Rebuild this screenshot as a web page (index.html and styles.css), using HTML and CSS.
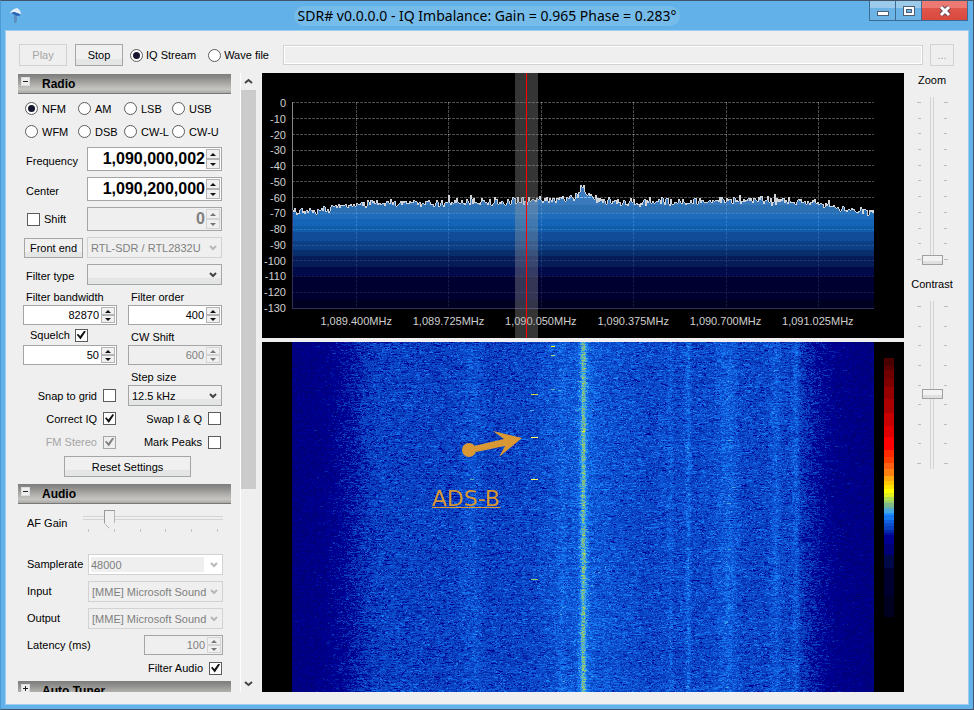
FILE: index.html
```html
<!DOCTYPE html>
<html lang="en">

<head>
    <meta charset="UTF-8">
    <meta name="viewport" content="width=device-width, initial-scale=1.0">
    <title>SDR#</title>
    <link rel="stylesheet" href="styles.css">
</head>
<body>
    <div class="window">
        <header class="titlebar">
            <svg class="app-icon" width="14" height="18" viewBox="0 0 14 18">
                <path d="M5 7 L8 7 L8 14 L7 16 L5 16 Z" fill="#5d8fc0"/>
                <path d="M1 6 Q3 2 8 1 Q12 3 12 8 Q9 6 7 8 Q4 6 1 6 Z" fill="#e4edf5"/>
                <path d="M2 6 Q5 4 8 6 Q10 6 12 8 L9 9 L6 8 Z" fill="#2464b8"/>
            </svg>
            <h1><span>SDR# v0.0.0.0 - IQ Imbalance: Gain = 0.965 Phase = 0.283°</span></h1>
            <div class="window-buttons">
                <button class="win-button" aria-label="Minimize">
                    <svg width="14" height="12" viewBox="0 0 14 12"><rect x="1.5" y="6.5" width="11" height="4" fill="#fff" stroke="#4f5f70"/></svg>
                </button>
                <button class="win-button" aria-label="Maximize">
                    <svg width="14" height="12" viewBox="0 0 14 12"><rect x="1.5" y="1.5" width="11" height="9" fill="#fff" stroke="#4f5f70"/><rect x="4.5" y="4.5" width="5" height="3" fill="#6cb4e6" stroke="#4f5f70"/></svg>
                </button>
                <button class="win-button close" aria-label="Close">
                    <svg width="14" height="12" viewBox="0 0 14 12"><path d="M3 2 L11 10 M11 2 L3 10" stroke="#6a4a55" stroke-width="5"/><path d="M3 2 L11 10 M11 2 L3 10" stroke="#fff" stroke-width="3"/></svg>
                </button>
            </div>
        </header>

        <div class="client">
            <div class="toolbar">
                <button class="button" disabled>Play</button>
                <button class="button">Stop</button>
                <label class="option"><input type="radio" name="source" checked>IQ Stream</label>
                <label class="option wave"><input type="radio" name="source">Wave file</label>
                <input class="file-name" type="text" aria-label="Wave file name" disabled>
                <button class="button browse" disabled>...</button>
            </div>

            <div class="main">
                <div class="sidebar">
                    <div class="panels">
                        <section class="panel">
                            <h2><button class="fold" aria-label="Collapse Radio"></button>Radio</h2>
                            <div class="modes">
                                <label class="option"><input type="radio" name="mode" checked>NFM</label>
                                <label class="option"><input type="radio" name="mode">AM</label>
                                <label class="option"><input type="radio" name="mode">LSB</label>
                                <label class="option"><input type="radio" name="mode">USB</label>
                                <label class="option"><input type="radio" name="mode">WFM</label>
                                <label class="option"><input type="radio" name="mode">DSB</label>
                                <label class="option"><input type="radio" name="mode">CW-L</label>
                                <label class="option"><input type="radio" name="mode">CW-U</label>
                            </div>
                            <div class="fields">
                                <div class="row">
                                    <label for="frequency">Frequency</label>
                                    <span class="spin big"><input id="frequency" type="text" value="1,090,000,002"><span class="arrows"><button aria-label="Up"></button><button aria-label="Down"></button></span></span>
                                </div>
                                <div class="row">
                                    <label for="center">Center</label>
                                    <span class="spin big"><input id="center" type="text" value="1,090,200,000"><span class="arrows"><button aria-label="Up"></button><button aria-label="Down"></button></span></span>
                                </div>
                                <div class="row">
                                    <label class="check"><input type="checkbox">Shift</label>
                                    <span class="spin big disabled"><input type="text" value="0" aria-label="Shift" disabled><span class="arrows"><button aria-label="Up" disabled></button><button aria-label="Down" disabled></button></span></span>
                                </div>
                                <div class="row">
                                    <button class="button front-end">Front end</button>
                                    <span class="combo disabled"><select aria-label="Front end" disabled><option>RTL-SDR / RTL2832U</option></select><svg width="8" height="6" viewBox="0 0 8 6"><path d="M1 1 L4 4 L7 1"/></svg></span>
                                </div>
                                <div class="row">
                                    <label for="filterType">Filter type</label>
                                    <span class="combo"><select id="filterType"><option></option></select><svg width="8" height="6" viewBox="0 0 8 6"><path d="M1 1 L4 4 L7 1"/></svg></span>
                                </div>
                            </div>
                            <div class="pairs">
                                <label class="above" for="bandwidth">Filter bandwidth</label>
                                <label class="above" for="order">Filter order</label>
                                <span class="spin"><input id="bandwidth" type="text" value="82870"><span class="arrows"><button aria-label="Up"></button><button aria-label="Down"></button></span></span>
                                <span class="spin"><input id="order" type="text" value="400"><span class="arrows"><button aria-label="Up"></button><button aria-label="Down"></button></span></span>
                                <label class="check squelch">Squelch<input type="checkbox" checked></label>
                                <label class="above" for="cwShift">CW Shift</label>
                                <span class="spin"><input type="text" value="50" aria-label="Squelch level"><span class="arrows"><button aria-label="Up"></button><button aria-label="Down"></button></span></span>
                                <span class="spin disabled"><input id="cwShift" type="text" value="600" disabled><span class="arrows"><button aria-label="Up" disabled></button><button aria-label="Down" disabled></button></span></span>
                                <span></span>
                                <label class="above" for="stepSize">Step size</label>
                                <label class="check right">Snap to grid<input type="checkbox"></label>
                                <span class="combo"><select id="stepSize"><option>12.5 kHz</option></select><svg width="8" height="6" viewBox="0 0 8 6"><path d="M1 1 L4 4 L7 1"/></svg></span>
                                <label class="check right">Correct IQ<input type="checkbox" checked></label>
                                <label class="check right">Swap I &amp; Q<input type="checkbox"></label>
                                <label class="check right muted">FM Stereo<input type="checkbox" checked disabled></label>
                                <label class="check right">Mark Peaks<input type="checkbox"></label>
                            </div>
                            <button class="button reset">Reset Settings</button>
                        </section>

                        <section class="panel">
                            <h2><button class="fold" aria-label="Collapse Audio"></button>Audio</h2>
                            <div class="gain">
                                <label for="afGain">AF Gain</label>
                                <div class="gain-slider">
                                    <input id="afGain" type="range" min="0" max="100" value="16">
                                    <div class="gain-ticks"><i></i><i></i><i></i><i></i><i></i><i></i></div>
                                </div>
                            </div>
                            <div class="fields audio">
                                <div class="row">
                                    <label for="samplerate">Samplerate</label>
                                    <span class="combo editable disabled"><select id="samplerate" disabled><option>48000</option></select><svg width="8" height="6" viewBox="0 0 8 6"><path d="M1 1 L4 4 L7 1"/></svg></span>
                                </div>
                                <div class="row">
                                    <label for="input">Input</label>
                                    <span class="combo disabled"><select id="input" disabled><option>[MME] Microsoft Sound</option></select><svg width="8" height="6" viewBox="0 0 8 6"><path d="M1 1 L4 4 L7 1"/></svg></span>
                                </div>
                                <div class="row">
                                    <label for="output">Output</label>
                                    <span class="combo disabled"><select id="output" disabled><option>[MME] Microsoft Sound</option></select><svg width="8" height="6" viewBox="0 0 8 6"><path d="M1 1 L4 4 L7 1"/></svg></span>
                                </div>
                                <div class="row">
                                    <label for="latency">Latency (ms)</label>
                                    <span class="spin disabled"><input id="latency" type="text" value="100" disabled><span class="arrows"><button aria-label="Up" disabled></button><button aria-label="Down" disabled></button></span></span>
                                </div>
                                <label class="check right">Filter Audio<input type="checkbox" checked></label>
                            </div>
                        </section>

                        <section class="panel">
                            <h2><button class="fold closed" aria-label="Expand Auto Tuner"></button>Auto Tuner</h2>
                        </section>
                    </div>
                    <div class="scrollbar">
                        <svg width="9" height="7" viewBox="0 0 9 7"><path d="M1 5 L4.5 2 L8 5"/></svg>
                        <div class="scroll-thumb"></div>
                        <svg width="9" height="7" viewBox="0 0 9 7"><path d="M1 2 L4.5 5 L8 2"/></svg>
                    </div>
                </div>

                <div class="displays">
                    <div class="spectrum">
                        <div class="levels">
                            <span>0</span><span>-10</span><span>-20</span><span>-30</span><span>-40</span><span>-50</span><span>-60</span><span>-70</span><span>-80</span><span>-90</span><span>-100</span><span>-110</span><span>-120</span><span>-130</span>
                        </div>
                        <div class="plot"><canvas id="spectrum"></canvas></div>
                        <div class="frequencies">
                            <span>1,089.400MHz</span><span>1,089.725MHz</span><span>1,090.050MHz</span><span>1,090.375MHz</span><span>1,090.700MHz</span><span>1,091.025MHz</span>
                        </div>
                        <div class="tuning"></div>
                    </div>
                    <div class="waterfall">
                        <div class="history"><canvas id="waterfall"></canvas></div>
                        <div class="scale"><canvas id="scale"></canvas></div>
                        <div class="note">
                            <svg width="62" height="28" viewBox="0 0 62 28"><circle cx="8" cy="20" r="7"/><path d="M13 16 L43 9 L32 1 L61 8 L38 27 L44 16 L15 22 Z"/></svg>
                            <span>ADS-B</span>
                        </div>
                    </div>
                </div>

                <div class="sliders">
                    <label for="zoom">Zoom</label>
                    <div class="slider">
                        <div class="ticks"><i></i><i></i><i></i><i></i><i></i><i></i><i></i><i></i><i></i><i></i><i></i></div>
                        <input id="zoom" type="range" min="0" max="100" value="0">
                        <div class="ticks far"><i></i><i></i><i></i><i></i><i></i><i></i><i></i><i></i><i></i><i></i><i></i></div>
                    </div>
                    <label for="contrast">Contrast</label>
                    <div class="slider">
                        <div class="ticks"><i></i><i></i><i></i><i></i><i></i><i></i><i></i><i></i><i></i></div>
                        <input id="contrast" type="range" min="0" max="100" value="44">
                        <div class="ticks far"><i></i><i></i><i></i><i></i><i></i><i></i><i></i><i></i><i></i></div>
                    </div>
                </div>
            </div>
        </div>
    </div>
    <script src="script.js"></script>
</body>
</html>
```

FILE: styles.css
```css
* {
    box-sizing: border-box;
}

body {
    margin: 0;
    font-family: "Liberation Sans", Arial, sans-serif;
    font-size: 11px;
    line-height: 14px;
    color: #000;
}

button, input, select {
    margin: 0;
    padding: 0;
    font: inherit;
    color: inherit;
    border-radius: 0;
}

canvas {
    display: block;
    width: 100%;
    height: 100%;
}

.window {
    display: flex;
    flex-direction: column;
    height: 100vh;
    padding: 0 5px 5px;
    border: 1px solid #41566a;
    border-left-color: #4a9bd4;
    background: #62b1e8;
}

/* title bar */

.titlebar {
    display: flex;
    height: 30px;
    padding-left: 3px;
}

.app-icon {
    margin-top: 6px;
}

.titlebar h1 {
    flex: 1;
    margin: 0;
    padding: 5px 0 0 82px;
    text-align: center;
    font: 14px/20px "Noto Sans", "Open Sans", sans-serif;
}

.titlebar h1 span {
    display: inline-block;
    padding: 0 4px;
    border-radius: 10px;
    background: #76bceb;
}

.window-buttons {
    display: flex;
    height: 20px;
    border: 1px solid #3c6c94;
    border-top: 0;
}

.win-button {
    display: flex;
    align-items: center;
    justify-content: center;
    width: 26px;
    border: 0;
    border-right: 1px solid #3c6c94;
    background: linear-gradient(#9ccaea 35%, #6cb4e6 35%);
}

.win-button.close {
    width: 45px;
    border-right: 0;
    background: linear-gradient(#ec7a72 35%, #e0564c 35%, #d9483d);
}

.client {
    display: flex;
    flex: 1;
    flex-direction: column;
    gap: 6px;
    min-height: 0;
    padding: 12px 0 12px 12px;
    outline: 1px solid #9fcdf0;
    background: #efefef;
}

/* shared controls */

.button {
    height: 21px;
    border: 1px solid #a5a5a5;
    background: linear-gradient(#f0f0f0 70%, #e4e6e6 70%);
}

.button:disabled {
    border-color: #d2d2d2;
    color: #a5a5a5;
    background: #efefef;
}

input[type="radio"],
input[type="checkbox"] {
    display: flex;
    flex: none;
    align-items: center;
    justify-content: center;
    width: 13px;
    height: 13px;
    appearance: none;
    border: 1px solid #5c5c5c;
    background: #fff;
}

input[type="radio"] {
    border-radius: 50%;
}

input[type="radio"]:checked::before {
    content: "";
    width: 7px;
    height: 7px;
    border-radius: 50%;
    background: #15152e;
}

input[type="checkbox"]:checked::before {
    content: "";
    width: 9px;
    height: 9px;
    background: #111;
    clip-path: polygon(0 48%, 14% 36%, 38% 62%, 84% 0, 100% 12%, 42% 100%);
}

input[type="checkbox"]:disabled {
    border-color: #a5a5a5;
    background: #efefef;
}

input[type="checkbox"]:disabled::before {
    background: #808080;
}

.option,
.check {
    display: flex;
    align-items: center;
    gap: 4px;
    white-space: nowrap;
}

.spin {
    display: flex;
    height: 20px;
    padding: 1px;
    border: 1px solid #a5a5a5;
    background: #fff;
}

.spin input {
    flex: 1;
    min-width: 0;
    padding-right: 2px;
    border: 0;
    outline: 0;
    text-align: right;
    background: none;
}

.spin.big {
    height: 24px;
}

.spin.big input {
    padding-right: 1px;
    font-size: 16px;
    font-weight: bold;
}

.arrows {
    display: flex;
    flex-direction: column;
    width: 14px;
}

.arrows button {
    display: flex;
    flex: 1;
    align-items: center;
    justify-content: center;
    min-height: 0;
    border: 1px solid #b4b4b4;
    background: #f0f0f0;
}

.arrows button::before {
    content: "";
    border: 3px solid transparent;
    border-top: 0;
    border-bottom-color: #111;
}

.arrows button:last-child::before {
    transform: rotate(180deg);
}

.spin.disabled,
.combo.disabled {
    color: #808080;
    background: #efefef;
}

.disabled .arrows button {
    border-color: #d4d4d4;
}

.disabled .arrows button::before {
    border-bottom-color: #777;
}

.combo {
    position: relative;
    height: 21px;
    border: 1px solid #a5a5a5;
    background: linear-gradient(#f0f0f0 70%, #e4e6e6 70%);
}

.combo.disabled {
    border-color: #d2d2d2;
}

.combo select {
    width: 100%;
    height: 100%;
    padding: 0 3px;
    appearance: none;
    border: 0;
    outline: 0;
    opacity: 1;
    background: none;
}

.combo svg {
    position: absolute;
    top: 7px;
    right: 4px;
    fill: none;
    stroke: #444;
    stroke-width: 2;
    pointer-events: none;
}

.combo.disabled svg {
    stroke: #b8b8b8;
}

.combo.editable {
    padding: 2px 18px 2px 2px;
    background: #fff;
}

.combo.editable select {
    padding: 0;
    background: #efefef;
}

/* toolbar */

.toolbar {
    display: flex;
    align-items: center;
    height: 24px;
    padding: 0 14px 0 1px;
}

.toolbar .button {
    width: 48px;
    height: 22px;
    margin-right: 8px;
}

.toolbar .option {
    gap: 3px;
    margin-left: -1px;
}

.toolbar .wave {
    margin: 0 14px 0 12px;
}

.file-name {
    flex: 1;
    min-width: 0;
    height: 20px;
    margin-right: 7px;
    border: 1px solid #d2d2d2;
    background: #efefef;
    box-shadow: inset 0 0 0 1px #fff;
}

.toolbar .browse {
    width: 24px;
    margin-right: 0;
}

.main {
    display: flex;
    flex: 1;
    min-height: 0;
}

/* side panels */

.sidebar {
    display: flex;
    gap: 8px;
    width: 244px;
}

.panels {
    width: 214px;
    padding-top: 1px;
    overflow: hidden;
}

.panel h2 {
    display: flex;
    align-items: center;
    gap: 12px;
    width: 213px;
    height: 20px;
    margin: 0;
    padding-left: 3px;
    border-bottom: 1px solid #777;
    font-size: 12px;
    background: linear-gradient(#7d7d7d, #8c8c8a 20%, #b4b3b0 60%, #c6c5c2 80%, #a9a9a6);
}

.fold {
    align-self: flex-start;
    width: 9px;
    height: 9px;
    margin-top: 3px;
    border: 1px solid #ddd;
    background: linear-gradient(#222, #222) 50% 50% / 5px 1px no-repeat #eee;
}

.fold.closed {
    background: linear-gradient(#222, #222) 50% 50% / 5px 1px no-repeat, linear-gradient(#222, #222) 50% 50% / 1px 5px no-repeat #eee;
}

.modes {
    display: grid;
    grid-template-columns: 53px 46px 48px 60px;
    grid-auto-rows: 23px;
    padding: 3px 0 4px 7px;
}

.fields {
    display: flex;
    flex-direction: column;
    gap: 6px;
    padding: 0 10px 0 6px;
}

.row {
    display: flex;
    align-items: center;
    justify-content: space-between;
}

.row label {
    padding: 3px 0 0 2px;
}

.row .spin,
.row .combo {
    width: 135px;
}

.row .spin:not(.big) {
    width: 79px;
}

.row .check {
    padding: 0 0 0 3px;
}

.front-end {
    width: 59px;
    height: 20px;
}

.pairs {
    display: grid;
    grid-template-columns: 94px 94px;
    grid-template-rows: 20px 20px 20px 20px 20px 21px 25px 22px;
    column-gap: 11px;
    padding-left: 5px;
}

.above {
    align-self: end;
    padding: 0 0 1px 3px;
}

.squelch {
    padding-left: 7px;
    gap: 5px;
}

.right {
    justify-content: flex-end;
    gap: 6px;
    padding-right: 1px;
}

.muted {
    color: #a5a5a5;
}

.reset {
    display: block;
    width: 127px;
    margin: 3px 0 7px 46px;
}

.gain {
    display: flex;
    height: 50px;
    padding: 5px 9px 0;
}

.gain > label {
    width: 56px;
    padding-top: 7px;
}

.gain-slider {
    flex: 1;
}

.gain-slider input {
    display: block;
    width: 100%;
    height: 20px;
    appearance: none;
    background: linear-gradient(#d4d4d4, #d4d4d4) 0 7px / 100% 1px no-repeat, linear-gradient(#d4d4d4, #d4d4d4) 0 10px / 100% 1px no-repeat;
}

.gain-slider input::-webkit-slider-thumb {
    appearance: none;
    width: 11px;
    height: 19px;
    border: 1px solid #999;
    border-bottom: 0;
    background: conic-gradient(from -45deg at 50% 17px, #f0f0f0 90deg, #999 90deg);
    clip-path: polygon(0 0, 100% 0, 100% 13px, 50% 100%, 0 13px);
}

.gain-ticks {
    display: flex;
    justify-content: space-between;
    padding: 0 5px;
}

.gain-ticks i {
    width: 1px;
    height: 3px;
    background: #c4c4c4;
}

.audio {
    padding-right: 9px;
}

.audio .row label {
    padding: 0 0 1px 3px;
}

.audio .right {
    height: 14px;
    margin-bottom: 6px;
}

.scrollbar {
    display: flex;
    flex-direction: column;
    align-items: center;
    width: 16px;
    padding: 5px 0;
    border-left: 1px solid #fff;
}

.scrollbar svg {
    flex: none;
    fill: none;
    stroke: #444;
    stroke-width: 2;
}

.scroll-thumb {
    width: 100%;
    height: 399px;
    margin: 5px 0 auto;
    background: #cbcbcb;
}

/* spectrum and waterfall */

.displays {
    display: flex;
    flex: 1;
    flex-direction: column;
    gap: 4px;
    min-width: 0;
}

.spectrum {
    position: relative;
    display: grid;
    grid-template-columns: 24px minmax(0, 1fr);
    grid-template-rows: 207px 1fr;
    column-gap: 6px;
    height: 265px;
    padding: 29px 30px 0 0;
    color: #cfcfcf;
    background: #000;
}

.levels {
    display: flex;
    flex-direction: column;
    justify-content: space-between;
    margin: -6px 0;
    text-align: right;
}

.frequencies {
    display: flex;
    grid-column: 1 / -1;
    padding: 5px 10px 0 48px;
}

.frequencies span {
    flex: 1;
    text-align: center;
}

.tuning {
    position: absolute;
    top: 0;
    bottom: 0;
    left: 39.4%;
    width: 23px;
    background: linear-gradient(#f00, #f00) 11px 0 / 1px 100% no-repeat rgba(160, 160, 160, 0.33);
}

.waterfall {
    position: relative;
    display: flex;
    flex: 1;
    min-height: 0;
    padding-left: 30px;
    background: #000;
}

.history {
    flex: 1;
    min-width: 0;
    overflow: hidden;
}

.scale {
    width: 10px;
    height: 259px;
    margin: 16px 10px 0;
}

.note {
    position: absolute;
    top: 88px;
    left: 170px;
    color: #da9835;
    font: 22px/26px "DejaVu Sans", sans-serif;
    text-decoration: underline;
    text-decoration-thickness: 1px;
}

.note svg {
    display: block;
    margin: 0 0 28px 29px;
    fill: #da9835;
}

/* zoom and contrast */

.sliders {
    display: flex;
    flex-direction: column;
    align-items: center;
    width: 56px;
    margin-right: 8px;
}

.slider {
    display: flex;
    gap: 1px;
    height: 168px;
    margin: 10px 0 12px;
}

.slider input {
    width: 21px;
    height: 100%;
    writing-mode: vertical-lr;
    direction: rtl;
    appearance: none;
    background: linear-gradient(90deg, #d4d4d4 1px, transparent 1px 3px, #d4d4d4 3px) 50% 0 / 4px 100% no-repeat;
}

.slider input::-webkit-slider-thumb {
    appearance: none;
    width: 21px;
    height: 10px;
    border: 1px solid #a0a0a0;
    background: linear-gradient(#f2f2f2 60%, #dfe1e1 60%);
}

.ticks {
    display: flex;
    flex-direction: column;
    align-items: flex-end;
    justify-content: space-between;
    width: 4px;
    padding: 5px 0;
}

.ticks.far {
    align-items: flex-start;
}

.ticks i {
    width: 3px;
    height: 1px;
    background: #bcbcbc;
}

.ticks i:first-child,
.ticks i:last-child {
    width: 4px;
}
```

FILE: script.js
```javascript
// [start row, colour] from strongest to weakest signal
const PALETTE = [
    [0, '#4b0000'], [8, '#5a0000'], [12, '#700000'], [21, '#800000'], [29, '#960000'],
    [41, '#ac0000'], [55, '#c80000'], [68, '#e00000'], [79, '#ff0000'], [92, '#ff2a00'],
    [99, '#ff4000'], [105, '#ff6014'], [111, '#ff8010'], [118, '#ffa810'], [123, '#ffc800'],
    [127, '#ffe000'], [131, '#ffff00'], [135, '#e0f020'], [139, '#b0dc50'], [143, '#98d070'],
    [145, '#80b888'], [149, '#60b0b0'], [151, '#48a8e0'], [155, '#1e90ff'], [157, '#1878f0'],
    [162, '#1060e0'], [165, '#0c50d0'], [168, '#0840c0'], [172, '#0428a8'], [175, '#0010a0'],
    [177, '#000090'], [186, '#000078'], [197, '#000848'], [210, '#000030'], [238, '#000020']
];

let seed = 1090;
function random() {
    seed = (seed * 1664525 + 1013904223) >>> 0;
    return seed / 4294967296;
}

function noise() {
    return random() + random() + random() - 1.5;
}

function interpolate(points, x) {
    for (let i = 1; i < points.length; i++) {
        if (x <= points[i][0]) {
            const [x0, y0] = points[i - 1];
            const [x1, y1] = points[i];
            return y0 + (y1 - y0) * (x - x0) / (x1 - x0);
        }
    }
    return points[points.length - 1][1];
}

function prepare(id) {
    const canvas = document.getElementById(id);
    canvas.width = canvas.clientWidth;
    canvas.height = canvas.clientHeight;
    return canvas;
}

function drawSpectrum() {
    const canvas = prepare('spectrum');
    const ctx = canvas.getContext('2d');
    const w = canvas.width;
    const h = canvas.height;
    const floor = [[0, 110], [30, 108], [50, 104], [80, 101], [150, 101], [210, 100], [265, 98], [282, 97],
        [287, 90], [290, 85], [294, 93], [302, 97], [330, 101], [380, 100], [450, 98], [500, 99],
        [530, 102], [550, 107], [582, 111]];

    const trace = [];
    for (let x = 0; x < w; x++) {
        let y = interpolate(floor, x * 582 / w) + noise() * 4;
        if (random() > 0.9) y -= random() * 5;
        trace.push(Math.round(y));
    }

    // signal area
    const bands = [[0, '#3a7abc'], [103, '#2d70b2'], [111, '#206cb8'], [117, '#1464b8'], [124, '#105ca8'],
        [130, '#104c98'], [139, '#0c3e84'], [148, '#082e6c'], [154, '#061c58'], [165, '#000a48'],
        [174, '#000030'], [198, '#000020']];
    bands.forEach(([top, color], i) => {
        const bottom = i + 1 < bands.length ? bands[i + 1][0] : h;
        ctx.fillStyle = color;
        for (let x = 0; x < w; x++) {
            const y = Math.max(top, trace[x]);
            if (y < bottom) ctx.fillRect(x, y, 1, bottom - y);
        }
    });

    // grid
    ctx.strokeStyle = 'rgba(150, 150, 150, 0.5)';
    ctx.setLineDash([3, 1]);
    ctx.globalCompositeOperation = 'lighter';
    for (let i = 0; i < 14; i++) {
        const y = Math.round(i * (h - 1) / 13) + 0.5;
        ctx.globalAlpha = i < 7 ? 1 : 0.3;
        ctx.beginPath();
        ctx.moveTo(0, y);
        ctx.lineTo(w, y);
        ctx.stroke();
    }
    for (let i = 0; i < 6; i++) {
        const x = Math.round((64 + i * 92.4) * w / 582) + 0.5;
        ctx.globalAlpha = 1;
        ctx.beginPath();
        ctx.moveTo(x, 0);
        ctx.lineTo(x, 98);
        ctx.stroke();
        ctx.globalAlpha = 0.3;
        ctx.beginPath();
        ctx.moveTo(x, 98);
        ctx.lineTo(x, h);
        ctx.stroke();
    }
    ctx.globalCompositeOperation = 'source-over';
    ctx.globalAlpha = 1;

    ctx.fillStyle = '#888';
    ctx.fillRect(0, 0, 1, 108);
    ctx.fillStyle = '#30305a';
    ctx.fillRect(0, 108, 1, h - 108);
    ctx.fillRect(0, h - 1, w, 1);

    // trace
    ctx.fillStyle = '#d0d4d8';
    for (let x = 1; x < w; x++) {
        const y = Math.min(trace[x], trace[x - 1]);
        ctx.fillRect(x, y, 1, Math.max(1, Math.abs(trace[x] - trace[x - 1])));
    }
}

function drawWaterfall() {
    const canvas = prepare('waterfall');
    const ctx = canvas.getContext('2d');
    const w = canvas.width;
    const h = canvas.height;
    const rows = [];
    PALETTE.forEach(([start, color], i) => {
        const end = i + 1 < PALETTE.length ? PALETTE[i + 1][0] : 259;
        const n = parseInt(color.slice(1), 16);
        for (let y = start; y < end; y++) rows[y] = [n >> 16, (n >> 8) & 255, n & 255];
    });

    // palette row per column, lower is stronger
    const base = [[0, 187], [30, 184], [50, 178], [75, 171], [90, 169], [160, 169], [182, 166], [195, 169],
        [240, 168], [262, 166], [270, 163], [275, 165], [285, 164], [288, 158], [290, 149], [292, 149], [294, 158],
        [297, 163], [305, 165], [320, 166], [360, 168], [374, 167], [378, 164], [382, 168], [392, 167],
        [396, 162], [400, 168], [420, 167], [437, 163], [450, 168], [475, 168], [484, 164], [490, 168],
        [498, 168], [504, 164], [508, 170], [516, 173], [530, 178], [545, 183], [582, 187]];
    const image = ctx.createImageData(w, h);
    for (let y = 0; y < h; y++) {
        const drift = noise();
        let last = 0;
        for (let x = 0; x < w; x++) {
            last = random() < 0.35 ? last : noise();
            const level = interpolate(base, x * 582 / w) + drift + last * 8;
            const c = rows[Math.max(0, Math.min(258, Math.round(level)))];
            const p = (y * w + x) * 4;
            image.data[p] = c[0];
            image.data[p + 1] = c[1];
            image.data[p + 2] = c[2];
            image.data[p + 3] = 255;
        }
    }
    ctx.putImageData(image, 0, 0);

    // short bursts
    const bursts = [[259, 4, '#ffff00'], [259, 13, '#a0d070'], [259, 47, '#60b0b0'], [239, 52, '#c8e048'], [238, 68, '#48a8e0'],
        [239, 95, '#ffff60'], [239, 137, '#ffff60'], [239, 237, '#98d070'], [178, 137, '#60b0b0']];
    bursts.forEach(([x, y, color]) => {
        ctx.fillStyle = color;
        ctx.fillRect(x * w / 582, y, x === 239 ? 7 : 4, 1);
    });
}

function drawScale() {
    const canvas = prepare('scale');
    const ctx = canvas.getContext('2d');
    PALETTE.forEach(([start, color]) => {
        ctx.fillStyle = color;
        ctx.fillRect(0, start, canvas.width, canvas.height - start);
    });
}

function draw() {
    seed = 1090;
    drawSpectrum();
    drawWaterfall();
    drawScale();
}

window.addEventListener('resize', draw);
draw();
```
